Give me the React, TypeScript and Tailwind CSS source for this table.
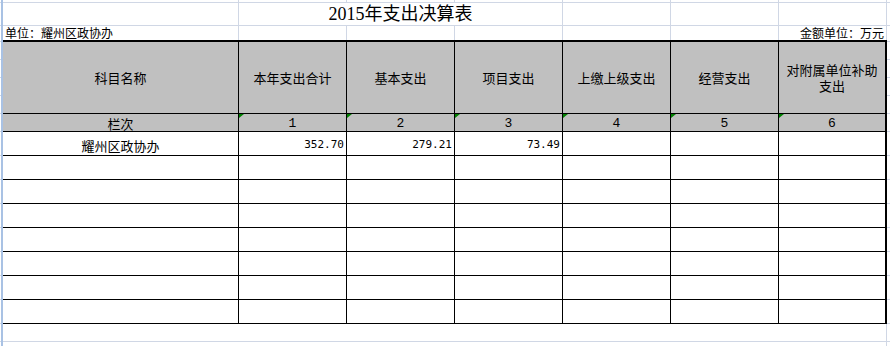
const grid = "grid grid-cols-[236px_108px_108px_108px_108px_108px_108px]";
const cjk = "font-['Noto_Sans_CJK_SC',sans-serif]";
const mono = "font-['Liberation_Mono',monospace]";
const num = "font-['DejaVu_Sans_Mono',monospace]";

const headers = ["科目名称", "本年支出合计", "基本支出", "项目支出", "上缴上级支出", "经营支出"];
const rows = [
  ["耀州区政协办", "352.70", "279.21", "73.49", "", "", ""],
  ["", "", "", "", "", "", ""],
  ["", "", "", "", "", "", ""],
  ["", "", "", "", "", "", ""],
  ["", "", "", "", "", "", ""],
  ["", "", "", "", "", "", ""],
  ["", "", "", "", "", "", ""],
  ["", "", "", "", "", "", ""],
];

// light sheet gridline ticks along the outer edges
function Ticks() {
  const hs = [3, 23, 16, 18, 18, 18, 18, 18, 24, 24, 24, 24, 24, 24, 24, 24, 18];
  return (
    <div className="flex flex-col">
      {hs.map((h, i) => (
        <div key={i} className="border-b border-[#d0d7e5]" style={{ height: h }} />
      ))}
    </div>
  );
}

function Flag() {
  return (
    <span className="absolute left-0 top-0 h-0 w-0 border-t-[4px] border-r-[5px] border-t-[#008000] border-r-transparent" />
  );
}

export default function App() {
  return (
    <div className={`flex h-[346px] w-[890px] overflow-hidden bg-white text-black ${cjk}`}>
      <div className="flex w-[3px]">
        <div className="w-[1px]">
          <Ticks />
        </div>
        <div className="w-[2px] bg-[#a9c2e4]" />
      </div>

      <div className="flex w-[884px] flex-col">
        {/* sheet rows above the table */}
        <div className={`${grid} h-[3px]`}>
          {Array.from({ length: 7 }).map((_, i) => (
            <div key={i} className="border-r border-b border-[#d0d7e5]" />
          ))}
        </div>
        <div className={`${grid} h-[23px]`}>
          <div className="border-r border-b border-[#d0d7e5]" />
          <div className="col-span-3 flex items-center justify-center border-r border-b border-[#d0d7e5] font-['Liberation_Serif','Noto_Sans_CJK_SC',serif] text-[18px] leading-none">
            2015年支出决算表
          </div>
          <div className="border-r border-b border-[#d0d7e5]" />
          <div className="border-r border-b border-[#d0d7e5]" />
          <div className="border-r border-b border-[#d0d7e5]" />
        </div>
        <div className={`${grid} h-[14px] text-[12px] leading-[14px]`}>
          <div className="whitespace-nowrap border-r border-[#d0d7e5] pl-[2px]">单位：耀州区政协办</div>
          <div className="border-r border-[#d0d7e5]" />
          <div className="border-r border-[#d0d7e5]" />
          <div className="border-r border-[#d0d7e5]" />
          <div className="border-r border-[#d0d7e5]" />
          <div className="border-r border-[#d0d7e5]" />
          <div className="whitespace-nowrap border-r border-[#d0d7e5] pr-[2px] text-right">金额单位：万元</div>
        </div>

        {/* table */}
        <div className={`${grid} border-t-2 border-black text-[13px]`}>
          {headers.map((h) => (
            <div key={h} className="flex h-[72px] items-center justify-center border-r border-b border-black bg-[#c0c0c0]">
              {h}
            </div>
          ))}
          <div className="flex h-[72px] items-center justify-center border-r-2 border-b border-black bg-[#c0c0c0]">
            <span className="block text-center leading-[16px]">
              对附属单位补助
              <br />
              支出
            </span>
          </div>

          <div className="flex h-[18px] items-center justify-center border-r border-b border-black bg-[#c0c0c0] pt-[1px] leading-none">
            栏次
          </div>
          {[1, 2, 3, 4, 5, 6].map((n) => (
            <div
              key={n}
              className={`relative flex h-[18px] items-center justify-center border-b border-black bg-[#c0c0c0] pt-[2px] ${mono} text-[13px] leading-none ${n === 6 ? "border-r-2" : "border-r"}`}
            >
              <Flag />
              {n}
            </div>
          ))}

          {rows.map((r, ri) =>
            r.map((c, ci) =>
              ci === 0 ? (
                <div key={`${ri}-${ci}`} className="flex h-[24px] items-center justify-center border-r border-b border-black pt-[3px] leading-none">
                  {c}
                </div>
              ) : (
                <div
                  key={`${ri}-${ci}`}
                  className={`flex h-[24px] items-center justify-end border-b border-black pt-[2px] pr-[2px] ${num} text-[11px] leading-none ${ci === 6 ? "border-r-2" : "border-r"}`}
                >
                  {c}
                </div>
              )
            )
          )}
        </div>

        <div className="h-[18px] border-r border-b border-[#d0d7e5]" />
        <div className="flex-1 border-r border-[#d0d7e5]" />
      </div>

      <div className="w-[3px]">
        <Ticks />
      </div>
    </div>
  );
}
